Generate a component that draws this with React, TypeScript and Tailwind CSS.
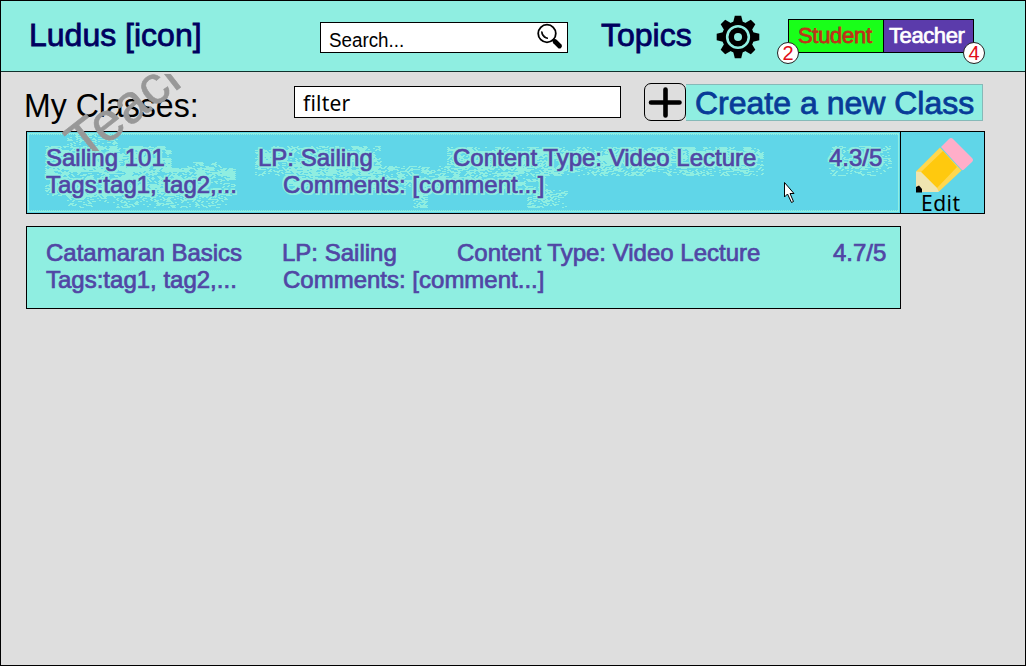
import React from "react";

type ClassItem = {
  name: string;
  nameWidth: string;
  typeWidth: string;
  lpWidth: string;
  rating: string;
};

const sailing: ClassItem = {
  name: "Sailing 101",
  nameWidth: "w-[212px]",
  lpWidth: "w-[195px]",
  typeWidth: "w-[376px]",
  rating: "4.3/5",
};

const catamaran: ClassItem = {
  name: "Catamaran Basics",
  nameWidth: "w-[236px]",
  lpWidth: "w-[175px]",
  typeWidth: "w-[376px]",
  rating: "4.7/5",
};

const noise = (n: number) => {
  let v = Math.imul(n ^ 0x9e3779b9, 0x85ebca6b);
  v = Math.imul(v ^ (v >>> 13), 0xc2b2ae35);
  return ((v ^ (v >>> 16)) >>> 0) / 4294967296;
};

// Areas of the highlighted row that carry the mottled texture: x, y, width, height, density
const areas: [number, number, number, number, number][] = [
  [18, 14, 126, 26, 0.85],
  [18, 36, 190, 28, 0.75],
  [40, 62, 160, 14, 0.4],
  [40, 2, 50, 14, 0.5],
  [160, 30, 34, 12, 0.6],
  [228, 14, 126, 30, 0.65],
  [258, 34, 262, 24, 0.6],
  [420, 15, 316, 18, 0.75],
  [420, 32, 316, 12, 0.5],
  [802, 14, 62, 30, 0.4],
  [386, 60, 14, 16, 0.7],
  [500, 58, 40, 18, 0.6],
];

const speckles = areas
  .map(([x, y, w, h, d], k) => {
    let out = "";
    for (let j = 0; j < h; j += 1)
      for (let i = 0; i < w; i += 2) {
        const patch = noise((i >> 3) * 71 + (j >> 2) * 3137 + k * 9173 + 5);
        if (noise(i * 37 + j * 9187 + k * 57719 + 1) < d * patch * 1.4)
          out += `M${x + i + (j & 1)} ${y + j}h2v1h-2z`;
      }
    return out;
  })
  .join("");

function Mottle() {
  return (
    <svg className="absolute inset-0" width="873" height="81" shapeRendering="crispEdges">
      <path d={speckles} fill="#8feee1" />
      <path d="M2 2.5H871M2 78.5H871" stroke="#8feee1" strokeDasharray="1 1" />
      <path d="M1.5 1V80M871.5 1V80M1 1.5H872M1 79.5H872" stroke="#8feee1" />
    </svg>
  );
}

function ClassText({ item, halo }: { item: ClassItem; halo?: boolean }) {
  return (
    <div
      className={
        "relative z-20 pl-[19px] pt-[12px] text-[24px] leading-[27px] text-[#5146a5] whitespace-nowrap [-webkit-text-stroke:0.7px_#5146a5] " +
        (halo
          ? "[text-shadow:2px_0_0_#8feee1,-2px_0_0_#8feee1,0_2px_0_#8feee1,0_-2px_0_#8feee1,2px_2px_0_#8feee1,-2px_-2px_0_#8feee1]"
          : "")
      }
    >
      <div className="flex">
        <span className={item.nameWidth + " shrink-0"}>{item.name}</span>
        <span className={item.lpWidth + " shrink-0"}>LP: Sailing</span>
        <span className={item.typeWidth + " shrink-0"}>Content Type: Video Lecture</span>
        <span>{item.rating}</span>
      </div>
      <div className="flex">
        <span className="w-[237px] shrink-0">Tags:tag1, tag2,...</span>
        <span>Comments: [comment...]</span>
      </div>
    </div>
  );
}

function Gear() {
  return (
    <svg width="44" height="44" viewBox="-22 -22 44 44">
      {[0, 45, 90, 135, 180, 225, 270, 315].map((a) => (
        <path key={a} d="M-5 -14L-3.2 -21.3H3.2L5 -14Z" transform={`rotate(${a})`} />
      ))}
      <circle r="16" />
      <circle r="10.8" fill="none" stroke="#8feee1" strokeWidth="2.6" />
      <circle r="4" fill="#8feee1" />
    </svg>
  );
}

function Magnifier() {
  return (
    <svg width="26" height="27" viewBox="0 0 26 27" fill="none" stroke="#000">
      <circle cx="10" cy="10.5" r="8.8" strokeWidth="1.8" />
      <path d="M4.800 8.5C4.300 12.5 7 15.5 11 15.300C8.500 14.500 5.800 12.500 4.800 8.500Z" strokeWidth="1" fill="#000" />
      <path d="M16 16.500L18 18.500" strokeWidth="2.400" />
      <path d="M18 18.500L22.500 23" strokeWidth="4.800" strokeLinecap="round" />
    </svg>
  );
}

function Pencil() {
  return (
    <svg className="absolute left-[14px] top-[5px]" width="60" height="58" viewBox="0 0 60 58">
      <path d="M1 34.5L25 10.5L46.5 33.5L24 54.5Z" fill="#ffd84f" />
      <path d="M6 35L28 14L42 30L22 51Z" fill="#ffc90e" />
      <path d="M1 34.5L6 35L22 51L24 55H1Z" fill="#efe4b0" />
      <path d="M1 50L4 48.5L7 52V55.5H1Z" fill="#000" />
      <path d="M26 10L34 2Q36 0 38 2L57 21Q59 23 57 25L49 32.5Q47.500 34 46 32Z" fill="#ffaec9" />
    </svg>
  );
}

function Badge({ value, place }: { value: string; place: string }) {
  return (
    <span
      className={
        "absolute top-[22px] flex h-[22px] w-[22px] items-center justify-center rounded-full border border-[#222] bg-white text-[20px] leading-none text-[#e00d18] " +
        place
      }
    >
      {value}
    </span>
  );
}

export default function App() {
  return (
    <div className="relative h-[666px] w-[1026px] overflow-hidden border border-black bg-[#dedede] font-['Liberation_Sans',Arial,sans-serif]">
      <header className="flex h-[71px] border-b border-[#12312d] bg-[#8feee1]">
        <div className="w-[319px] shrink-0 pl-[28px] pt-[16px] text-[32px] leading-[37px] text-[#00005f] [-webkit-text-stroke:0.8px_#00005f]">
          Ludus [icon]
        </div>
        <div className="mt-[21px] flex h-[31px] w-[248px] shrink-0 justify-between border border-black bg-white pl-[8px] pr-[4px]">
          <span className="origin-left scale-x-[0.94] pt-[6px] text-[20px] leading-[23px]">Search...</span>
          <Magnifier />
        </div>
        <div className="w-[148px] shrink-0 pl-[33px] pt-[16px] text-[32px] leading-[37px] text-[#00005f] [-webkit-text-stroke:0.8px_#00005f]">
          Topics
        </div>
        <div className="w-[72px] shrink-0 pt-[14px]">
          <Gear />
        </div>
        <div className="relative mt-[18px] flex h-[34px] w-[186px] shrink-0 border border-black text-[22px] leading-[32px]">
          <span className="w-[95px] shrink-0 border-r border-black bg-[#19ff19] pl-[9px] tracking-[-0.3px] text-[#bf3318] [-webkit-text-stroke:0.8px_#bf3318]">
            Student
          </span>
          <span className="grow bg-[#5b3bab] pl-[5px] tracking-[-0.4px] text-white [-webkit-text-stroke:0.7px_#fff]">
            Teacher
          </span>
          <Badge value="2" place="-left-[12px]" />
          <Badge value="4" place="-right-[12px]" />
        </div>
      </header>

      <section className="flex h-[59px]">
        <h1 className="w-[293px] shrink-0 pl-[23px] pt-[15px] text-[33px] leading-[37px]">
          <span className="inline-block origin-left scale-x-[0.972]">My Classes:</span>
        </h1>
        <div className="mt-[14px] h-[32px] w-[327px] shrink-0 border border-black bg-white pl-[8px] pt-[2px] font-['Noto_Sans',sans-serif] text-[21px] leading-[28px] tracking-[0.2px]">
          filter
        </div>
        <div className="ml-[23px] mt-[11px] flex h-[38px] w-[42px] shrink-0 items-center justify-center rounded-[7px] border border-black">
          <svg width="36" height="32" stroke="#000" strokeWidth="4.600" strokeLinecap="round">
            <path d="M4 16.500H32.500M18.500 3.500V29.500" />
          </svg>
        </div>
        <div className="mt-[12px] h-[37px] w-[297px] shrink-0 border-y border-r border-[#86b9b8] bg-[#8feee1] pl-[9px] text-[32px] leading-[37px] text-[#083b98] [-webkit-text-stroke:0.8px_#083b98]">
          Create a new Class
        </div>
      </section>

      <main className="flex flex-col gap-[12px] pl-[25px]">
        <div className="flex">
          <article className="relative h-[83px] w-[875px] border border-black bg-[#60d6e8]">
            <Mottle />
            <ClassText item={sailing} halo />
          </article>
          <button className="relative -ml-px h-[83px] w-[85px] border border-black bg-[#60d6e8]">
            <Pencil />
            <span className="absolute left-[20px] top-[58px] font-['Noto_Sans',sans-serif] text-[21px] leading-[27px] tracking-[0.5px]">
              Edit
            </span>
          </button>
        </div>
        <article className="h-[83px] w-[875px] border border-black bg-[#8feee1]">
          <ClassText item={catamaran} />
        </article>
      </main>

      <div className="pointer-events-none absolute left-0 top-[73px] z-10 h-[100px] w-[183px] overflow-hidden">
        <span className="absolute left-[88px] top-[41px] origin-bottom-left -rotate-[38deg] text-[54px] leading-[54px] text-[#989898] [-webkit-text-stroke:0.6px_#989898]">
          Teacher
        </span>
      </div>

      <svg className="absolute left-[783px] top-[181px] z-30" width="12" height="23" viewBox="0 0 12 23">
        <path d="M.5 .5V15L3.500 12L7.500 20.500L9.500 19.500L6 11.500H10Z" fill="#fff" stroke="#000" />
      </svg>
    </div>
  );
}
